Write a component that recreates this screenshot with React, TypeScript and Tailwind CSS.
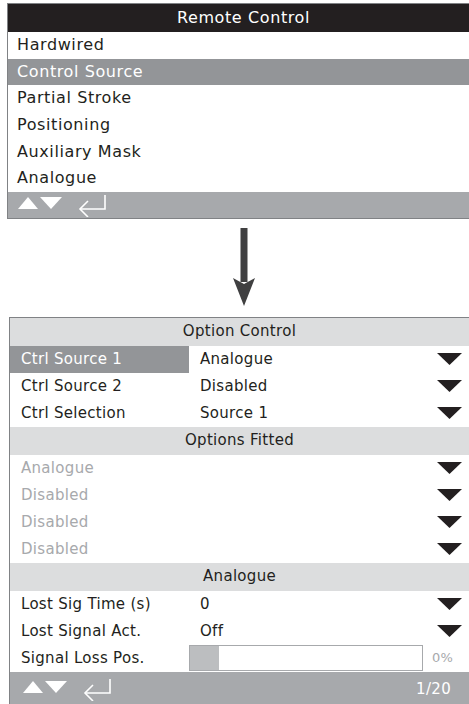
import React from "react";

const font = { fontFamily: '"DejaVu Sans", "Liberation Sans", sans-serif' };

const Down = () => (
  <svg width="25" height="12" viewBox="0 0 25 12" className="shrink-0">
    <polygon points="0,0 25,0 12.5,12" fill="#231f20" />
  </svg>
);

const NavIcons = () => (
  <svg width="92" height="24" viewBox="0 0 92 24" className="shrink-0">
    <polygon points="0,16 10,4 20,16" fill="#ffffff" />
    <polygon points="22,4 44,4 33,16" fill="#ffffff" />
    <polyline points="87,2 87,16 62,16" fill="none" stroke="#ffffff" strokeWidth="1.6" />
    <polyline points="70,8 62,16 70,24" fill="none" stroke="#ffffff" strokeWidth="1.6" />
  </svg>
);

const menu = ["Hardwired", "Control Source", "Partial Stroke", "Positioning", "Auxiliary Mask", "Analogue"];

const Row = ({ label, value, active }: { label: string; value: string; active?: boolean }) => (
  <div className="flex h-[27px] items-center">
    <div className={`flex h-full w-[179px] items-center pl-[11px] ${active ? "bg-[#939598] text-white" : "text-[#231f20]"}`}>
      {label}
    </div>
    <div className="flex-1 pl-[11px] text-[#231f20]">{value}</div>
    <div className="pr-[7px]">
      <Down />
    </div>
  </div>
);

const Fitted = ({ label }: { label: string }) => (
  <div className="flex h-[27px] items-center justify-between pl-[11px] pr-[7px]">
    <span className="text-[#a7a9ac]">{label}</span>
    <Down />
  </div>
);

const Head = ({ title }: { title: string }) => (
  <div className="flex h-[28px] items-center justify-center bg-[#dcddde] text-[#231f20]">{title}</div>
);

export default function App() {
  return (
    <div className="min-h-[704px] w-[469px] overflow-hidden bg-white" style={font}>
      {/* top menu */}
      <div className="ml-[7px] mt-[3px] border-l border-t border-b border-[#808285] text-[16px] tracking-[0.6px]">
        <div className="flex h-[28px] items-center justify-center bg-[#231f20] pl-[10px] text-white">
          Remote Control
        </div>
        {menu.map((m) => (
          <div
            key={m}
            className={`flex h-[26.6px] items-center pl-[9px] ${m === "Control Source" ? "bg-[#939598] text-white" : "text-[#231f20]"}`}
          >
            {m}
          </div>
        ))}
        <div className="flex h-[26px] items-center bg-[#a7a9ac] pl-[10px]">
          <NavIcons />
        </div>
      </div>

      {/* arrow */}
      <div className="flex h-[98px] items-center justify-center pl-[18px]">
        <svg width="22" height="80" viewBox="0 0 22 80">
          <rect x="7.5" y="0" width="7" height="54" fill="#404041" />
          <polygon points="0,50 11,78 22,50 11,56" fill="#404041" />
        </svg>
      </div>

      {/* settings */}
      <div className="ml-[9px] border-l border-t border-[#808285] text-[15px] tracking-[0.3px]">
        <Head title="Option Control" />
        <Row label="Ctrl Source 1" value="Analogue" active />
        <Row label="Ctrl Source 2" value="Disabled" />
        <Row label="Ctrl Selection" value="Source 1" />
        <Head title="Options Fitted" />
        <Fitted label="Analogue" />
        <Fitted label="Disabled" />
        <Fitted label="Disabled" />
        <Fitted label="Disabled" />
        <Head title="Analogue" />
        <Row label="Lost Sig Time (s)" value="0" />
        <Row label="Lost Signal Act." value="Off" />
        <div className="flex h-[27px] items-center">
          <div className="flex w-[179px] items-center pl-[11px] text-[#231f20]">Signal Loss Pos.</div>
          <div className="flex h-[26px] w-[234px] border border-[#a7a9ac]">
            <div className="h-full w-[29px] bg-[#bcbec0]" />
          </div>
          <div className="pl-[9px] text-[13px] text-[#a7a9ac]">0%</div>
        </div>
        <div className="flex h-[35px] items-center justify-between bg-[#a7a9ac] pl-[13px] pr-[18px]">
          <NavIcons />
          <span className="text-white">1/20</span>
        </div>
      </div>
    </div>
  );
}
